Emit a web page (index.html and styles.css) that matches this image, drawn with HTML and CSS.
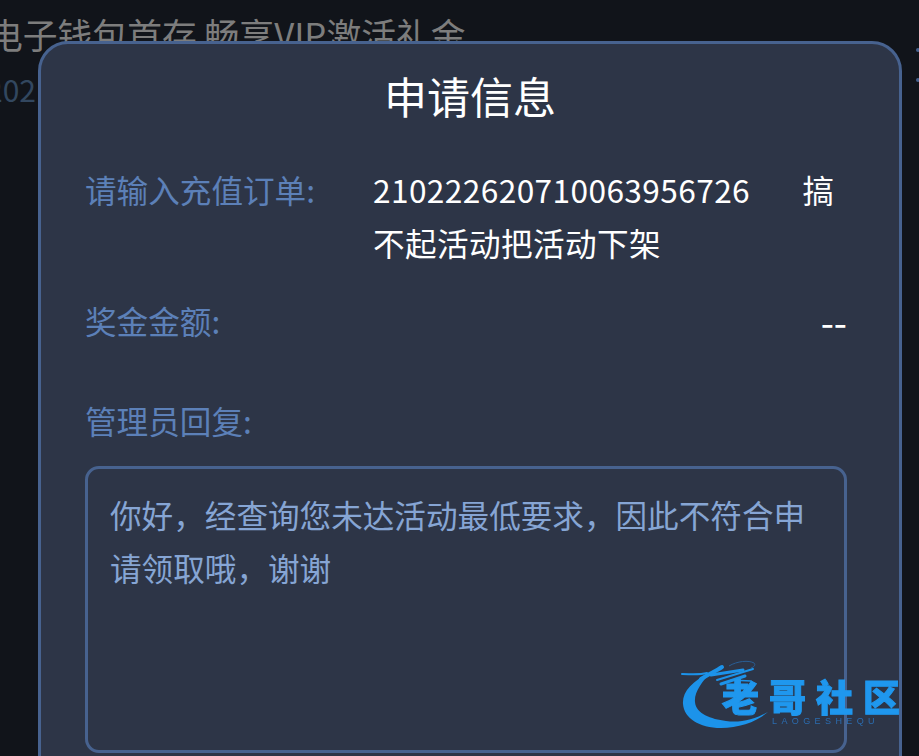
FILE: index.html
```html
<!DOCTYPE html>
<html lang="zh-CN">
<head>
    <meta charset="UTF-8">
    <meta name="viewport" content="width=device-width, initial-scale=1.0">
    <title>申请信息</title>
    <link rel="stylesheet" href="styles.css">
</head>
<body>
    <div class="page-behind">
        <div class="activity-title">电子钱包首存 畅享VIP激活礼金</div>
        <div class="activity-date">202</div>
        <div class="page-edge"></div>
    </div>

    <div class="modal">
        <h1>申请信息</h1>

        <div class="modal-body">
            <div class="info-row first">
                <span class="info-label">请输入充值订单:</span>
                <span class="info-value">210222620710063956726       搞不起活动把活动下架</span>
            </div>
            <div class="info-row amount">
                <span class="info-label">奖金金额:</span>
                <span class="info-amount">--</span>
            </div>

            <div class="reply-label">管理员回复:</div>
            <div class="reply-box">你好，经查询您未达活动最低要求，因此不符合申请领取哦，谢谢</div>
        </div>
    </div>

    <div class="watermark">
        <svg class="watermark-dragon" width="100" height="76" viewBox="0 0 100 76">
            <path d="M30 12C11 21 1 32 2 44c1 14 16 24 38 24 17 0 34-5 47-16-14 8-29 11-42 9-15-2-30-7-31-19-1-10 7-20 16-30z" fill="#1c93ea"/>
            <g fill="none" stroke="#1c93ea" stroke-linecap="round">
                <path d="M1 14c9 0 17 1 25-1" stroke-width="2"/>
                <path d="M20 19c8-5 15-8 21-12" stroke-width="4"/>
                <path d="M30 15l32-5" stroke-width="3"/>
                <path d="M36 20l36-11" stroke-width="2"/>
                <path d="M40 24l24-8" stroke-width="3"/>
                <path d="M50 20l20 1" stroke-width="1.5"/>
            </g>
            <path d="M48 6C56 1 68 0 73 3c2 2 0 4-3 5" fill="none" stroke="#2a5f96" stroke-width="1"/>
        </svg>
        <div class="watermark-name">老哥社区</div>
        <div class="watermark-sub">LAOGESHEQU</div>
    </div>
</body>
</html>
```

FILE: styles.css
```css
* {
    margin: 0;
    padding: 0;
    box-sizing: border-box;
}

html, body {
    height: 100%;
    overflow: hidden;
}

body {
    background: #11141a;
    font-family: 'Noto Sans CJK SC', 'Noto Sans', sans-serif;
    font-size: 31.6px;
}

.page-behind {
    height: 100%;
    padding-top: 11px;
}

.activity-title {
    margin-left: -12px;
    color: #7d7d7d;
    font-size: 34.8px;
    line-height: 46px;
    white-space: nowrap;
}

.activity-date {
    margin-left: -14px;
    margin-top: 12px;
    font-size: 30px;
    line-height: 40px;
    color: #32475f;
}

/* edge of something cut off on the right */
.page-edge {
    position: absolute;
    top: 48px;
    left: 916px;
    width: 4px;
    height: 4px;
    background: #47628f;
    border-radius: 50%;
    box-shadow: 0 30px 0 #47628f;
}

.modal {
    position: absolute;
    top: 41px;
    left: 38px;
    width: 864px;
    height: 900px;
    background: #2d3547;
    border: 3px solid #47628f;
    border-radius: 30px;
}

h1 {
    margin-top: 18px;
    color: #fff;
    font-size: 43px;
    font-weight: 400;
    line-height: 66px;
    text-align: center;
}

.modal-body {
    padding: 0 52px 0 44px;
}

.info-row {
    display: flex;
    justify-content: space-between;
    line-height: 53px;
}

.info-row.first {
    margin-top: 35px;
}

.info-row.amount {
    margin-top: 25px;
}

.info-label, .reply-label {
    color: #5c80b8;
}

.info-value {
    width: 474px;
    color: #fff;
    letter-spacing: 0.42px;
    white-space: pre-wrap;
}

.info-amount {
    color: #fff;
    font-size: 38px;
}

.reply-label {
    margin-top: 47px;
    line-height: 53px;
}

.reply-box {
    height: 287px;
    margin-top: 19px;
    padding: 19px 22px;
    color: #86a5d4;
    line-height: 53px;
    border: 3px solid #47628f;
    border-radius: 14px;
}

.watermark {
    position: absolute;
    top: 660px;
    left: 681px;
    width: 238px;
    height: 96px;
    filter: blur(0.7px);
}

.watermark-dragon {
    position: absolute;
    top: 0;
    left: 0;
}

.watermark-name {
    position: absolute;
    top: 16px;
    left: 41px;
    color: #1f97ee;
    font-size: 37px;
    font-weight: 900;
    line-height: 40px;
    letter-spacing: 10px;
    white-space: nowrap;
    -webkit-text-stroke: 1px #1f97ee;
}

.watermark-sub {
    position: absolute;
    top: 56px;
    left: 91px;
    color: #2b6cb0;
    font-family: 'Liberation Sans', sans-serif;
    font-size: 9px;
    line-height: 10px;
    letter-spacing: 4.4px;
    white-space: nowrap;
}
```
